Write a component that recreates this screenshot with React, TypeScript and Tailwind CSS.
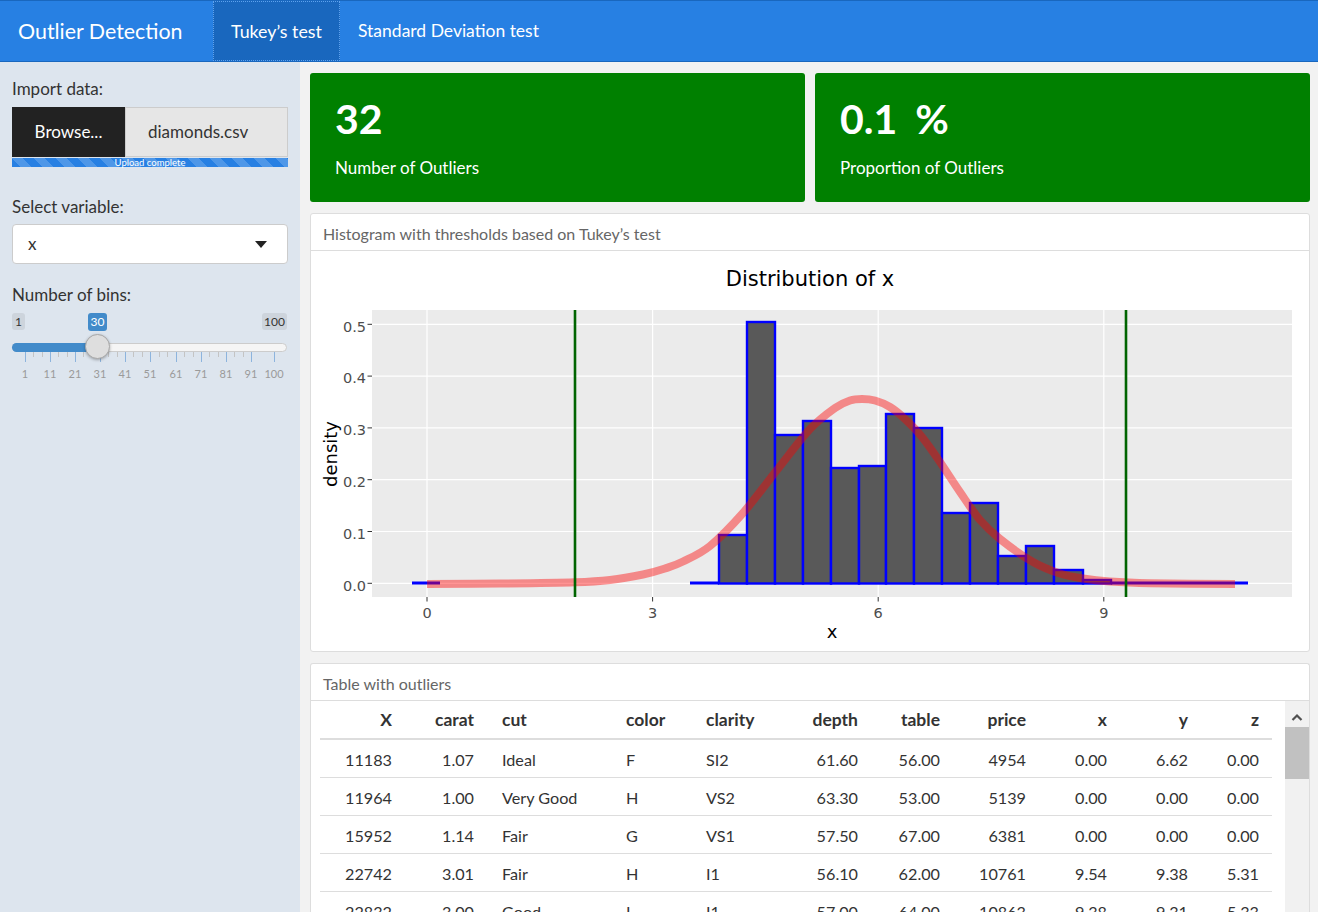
import React from "react";

const FONT = "font-['Lato',sans-serif]";

type Col = { h: string; w: string; a: string };
const cols: Col[] = [
  { h: "X", w: "w-[72px]", a: "text-right" },
  { h: "carat", w: "w-[82px]", a: "text-right" },
  { h: "cut", w: "w-[152px] pl-[28px]", a: "text-left" },
  { h: "color", w: "w-[80px]", a: "text-left" },
  { h: "clarity", w: "w-[74px]", a: "text-left" },
  { h: "depth", w: "w-[78px]", a: "text-right" },
  { h: "table", w: "w-[82px]", a: "text-right" },
  { h: "price", w: "w-[86px]", a: "text-right" },
  { h: "x", w: "w-[81px]", a: "text-right" },
  { h: "y", w: "w-[81px]", a: "text-right" },
  { h: "z", w: "w-[84px] pr-[13px]", a: "text-right" },
];

const rows: string[][] = [
  ["11183", "1.07", "Ideal", "F", "SI2", "61.60", "56.00", "4954", "0.00", "6.62", "0.00"],
  ["11964", "1.00", "Very Good", "H", "VS2", "63.30", "53.00", "5139", "0.00", "0.00", "0.00"],
  ["15952", "1.14", "Fair", "G", "VS1", "57.50", "67.00", "6381", "0.00", "0.00", "0.00"],
  ["22742", "3.01", "Fair", "H", "I1", "56.10", "62.00", "10761", "9.54", "9.38", "5.31"],
  ["22832", "3.00", "Good", "I", "I1", "57.00", "64.00", "10863", "9.38", "9.31", "5.33"],
  ["24068", "2.00", "Premium", "H", "SI2", "58.90", "57.00", "12210", "8.09", "58.90", "8.06"],
];

function smoothPath(pts: [number, number][]) {
  let d = `M${pts[0][0]},${pts[0][1]}`;
  for (let i = 0; i < pts.length - 1; i++) {
    const p0 = pts[i - 1] || pts[i];
    const p1 = pts[i];
    const p2 = pts[i + 1];
    const p3 = pts[i + 2] || p2;
    const c1x = p1[0] + (p2[0] - p0[0]) / 6;
    const c1y = p1[1] + (p2[1] - p0[1]) / 6;
    const c2x = p2[0] - (p3[0] - p1[0]) / 6;
    const c2y = p2[1] - (p3[1] - p1[1]) / 6;
    d += ` C${c1x.toFixed(1)},${c1y.toFixed(1)} ${c2x.toFixed(1)},${c2y.toFixed(1)} ${p2[0]},${p2[1]}`;
  }
  return d;
}

function Chart() {
  const yZero = 584.3;
  const step = 51.8;
  const yGrid = [0, 1, 2, 3, 4, 5].map((i) => yZero - step * i);
  const xGrid = [427, 652.6, 878.2, 1103.8];
  const edges = [719, 747, 775, 803, 831, 859, 886, 914, 942, 970, 998, 1026, 1054, 1083, 1111];
  const tops = [536, 323, 436, 422, 469, 467, 415, 429, 514, 504, 557, 547, 571, 581];
  const curve: [number, number][] = [
    [427, 585], [500, 584.6], [575, 583.3], [610, 581], [643, 575.5], [665, 569.5], [683, 562.5],
    [710, 547], [743, 514], [777, 471], [810, 430], [835, 409], [850, 401.5], [862, 400],
    [875, 401.5], [890, 408], [905, 420], [922, 438], [940, 463], [960, 493], [980, 521],
    [1000, 540], [1033, 563], [1060, 574.5], [1083, 579.5], [1110, 582.5], [1150, 584.2], [1235, 585],
  ];
  return (
    <svg width="998" height="399" viewBox="311 252 998 399" className="block">
      <text x="810" y="287" textAnchor="middle" fontFamily="DejaVu Sans" fontSize="21" fill="#000">
        Distribution of x
      </text>
      <rect x="372" y="311" width="920" height="287" fill="#ebebeb" />
      {yGrid.map((y, i) => (
        <line key={"hy" + i} x1="372" x2="1292" y1={y} y2={y} stroke="#ffffff" strokeWidth="1.2" />
      ))}
      {xGrid.map((x, i) => (
        <line key={"vx" + i} x1={x} x2={x} y1="311" y2="598" stroke="#ffffff" strokeWidth="1.2" />
      ))}
      <line x1="412" x2="440" y1="584" y2="584" stroke="#0000ff" strokeWidth="3" />
      <line x1="690" x2="719" y1="584" y2="584" stroke="#0000ff" strokeWidth="3" />
      <line x1="1111" x2="1248" y1="584" y2="584" stroke="#0000ff" strokeWidth="3" />
      {tops.map((t, i) => (
        <rect
          key={"b" + i}
          x={edges[i]}
          y={t}
          width={edges[i + 1] - edges[i]}
          height={584.5 - t}
          fill="#595959"
          stroke="#0000ff"
          strokeWidth="2.4"
        />
      ))}
      <path d={smoothPath(curve)} fill="none" stroke="#ff0000" strokeOpacity="0.42" strokeWidth="8" />
      <line x1="575" x2="575" y1="311" y2="598" stroke="#006400" strokeWidth="2.6" />
      <line x1="1126" x2="1126" y1="311" y2="598" stroke="#006400" strokeWidth="2.6" />
      {yGrid.map((y, i) => (
        <g key={"yl" + i}>
          <line x1="367.5" x2="372" y1={y} y2={y} stroke="#333333" strokeWidth="1" />
          <text x="366" y={y + 7.3} textAnchor="end" fontFamily="DejaVu Sans" fontSize="14.5" fill="#4d4d4d">
            {(i / 10).toFixed(1)}
          </text>
        </g>
      ))}
      {xGrid.map((x, i) => (
        <g key={"xl" + i}>
          <line x1={x} x2={x} y1="598" y2="602.5" stroke="#333333" strokeWidth="1" />
          <text x={x} y="619" textAnchor="middle" fontFamily="DejaVu Sans" fontSize="14.5" fill="#4d4d4d">
            {i * 3}
          </text>
        </g>
      ))}
      <text x="832" y="639" textAnchor="middle" fontFamily="DejaVu Sans" fontSize="18" fill="#000">
        x
      </text>
      <text
        x="337"
        y="455"
        transform="rotate(-90 337 455)"
        textAnchor="middle"
        fontFamily="DejaVu Sans"
        fontSize="18"
        fill="#000"
      >
        density
      </text>
    </svg>
  );
}

function Slider() {
  const majors = [25, 50, 75, 100, 125, 150, 176, 201, 226, 251, 274];
  const labels = ["1", "11", "21", "31", "41", "51", "61", "71", "81", "91", "100"];
  const minors: number[] = [];
  for (let i = 0; i < majors.length - 2; i++) {
    const a = majors[i];
    const b = majors[i + 1];
    minors.push(a + (b - a) / 3, a + (2 * (b - a)) / 3);
  }
  return (
    <div className="relative mt-[6px] h-[72px] w-[275px]">
      <div className="absolute left-0 top-0 flex h-[17px] w-[13px] items-center justify-center rounded-[3px] bg-[#cdd4dc] text-[12px] text-[#333]">
        1
      </div>
      <div className="absolute left-[76px] top-0 flex h-[18px] w-[19px] items-center justify-center rounded-[3px] bg-[#428bca] text-[12px] text-white">
        30
      </div>
      <div className="absolute right-0 top-0 flex h-[17px] w-[25px] items-center justify-center rounded-[3px] bg-[#cdd4dc] text-[12px] text-[#333]">
        100
      </div>
      <div className="absolute left-0 top-[30px] h-[9px] w-[275px] rounded-full border border-[#cccccc] bg-[#f5f5f5]" />
      <div className="absolute left-0 top-[30px] h-[9px] w-[86px] rounded-l-full bg-[#428bca]" />
      {minors.map((x, i) => (
        <div
          key={"mn" + i}
          className="absolute top-[39px] h-[5px] w-px bg-[#c4c4c4]"
          style={{ left: `${x - 12}px` }}
        />
      ))}
      {majors.map((x, i) => (
        <div
          key={"mj" + i}
          className="absolute top-[39px] h-[10px] w-px bg-[#8db4dd]"
          style={{ left: `${x - 12}px` }}
        />
      ))}
      {majors.map((x, i) => (
        <div
          key={"lb" + i}
          className="absolute top-[54px] w-[30px] text-center text-[11px] leading-[14px] text-[#9a9a9a]"
          style={{ left: `${x - 12 - 15}px` }}
        >
          {labels[i]}
        </div>
      ))}
      <div className="absolute left-[73px] top-[21px] h-[25px] w-[25px] rounded-full border border-[#a8a8a8] bg-[#dedede] shadow-[0_1px_3px_rgba(0,0,0,0.3)]" />
    </div>
  );
}

export default function App() {
  return (
    <div className={`${FONT} flex h-[912px] w-[1318px] flex-col overflow-hidden bg-[#f2f2f2] text-[#333]`}>
      <nav className="flex h-[62px] shrink-0 items-stretch border-b border-t border-[#1967be] bg-[#2780e3] text-white">
        <div className="flex w-[213px] items-center pl-[18px] text-[21.4px]">Outlier Detection</div>
        <div className="flex w-[127px] items-center bg-[#1967be] pl-[18px] text-[17.8px] outline-1 -outline-offset-1 outline-dotted outline-[#5ea2ee]">
          Tukey’s test
        </div>
        <div className="flex items-center pl-[18px] text-[17.5px]">Standard Deviation test</div>
      </nav>
      <div className="flex min-h-0 flex-1">
        <aside className="w-[300px] shrink-0 bg-[#dde5ee] px-[12px] pt-[14px]">
          <div className="h-[25px] text-[17px] leading-[25px]">Import data:</div>
          <div className="mt-[6px] flex h-[50px]">
            <div className="flex w-[113px] items-center justify-center bg-[#222222] text-[17px] text-white">
              Browse...
            </div>
            <div className="flex flex-1 items-center border border-[#cccccc] bg-[#e6e6e6] pl-[22px] text-[17px]">
              diamonds.csv
            </div>
          </div>
          <div className="mt-px flex h-[9px] items-center justify-center overflow-visible bg-[#2780e3] bg-[linear-gradient(45deg,rgba(255,255,255,.18)_25%,transparent_25%,transparent_50%,rgba(255,255,255,.18)_50%,rgba(255,255,255,.18)_75%,transparent_75%,transparent)] bg-size-[22px_22px] text-[9.5px] leading-[9px] text-white">
            Upload complete
          </div>
          <div className="mt-[27px] h-[25px] text-[17px] leading-[25px]">Select variable:</div>
          <div className="mt-[5px] flex h-[40px] items-center justify-between rounded-[4px] border border-[#cccccc] bg-white pl-[15px] pr-[20px] text-[17px]">
            <span>x</span>
            <svg width="12" height="7" viewBox="0 0 12 7">
              <path d="M0 0 L12 0 L6 7 Z" fill="#222" />
            </svg>
          </div>
          <div className="mt-[18px] h-[25px] text-[17px] leading-[25px]">Number of bins:</div>
          <Slider />
        </aside>
        <main className="flex min-w-0 flex-1 flex-col gap-[11px] overflow-hidden pl-[10px] pr-[8px] pt-[11px]">
          <div className="flex h-[129px] shrink-0 gap-[10px]">
            <div className="flex-1 rounded-[3px] bg-[#008000] pl-[25px] pt-[22px] text-white">
              <div className="h-[48px] text-[41px] font-bold leading-[48px]">32</div>
              <div className="mt-[12px] h-[25px] text-[17px] leading-[25px]">Number of Outliers</div>
            </div>
            <div className="flex-1 rounded-[3px] bg-[#008000] pl-[25px] pt-[22px] text-white">
              <div className="h-[48px] text-[41px] font-bold leading-[48px] [word-spacing:8px]">0.1 %</div>
              <div className="mt-[12px] h-[25px] text-[17px] leading-[25px]">Proportion of Outliers</div>
            </div>
          </div>
          <div className="h-[439px] shrink-0 rounded-[3px] border border-[#dddddd] bg-white">
            <div className="flex h-[37px] items-center border-b border-[#dddddd] pl-[12px] pt-[4px] text-[16px] text-[#666]">
              Histogram with thresholds based on Tukey’s test
            </div>
            <Chart />
          </div>
          <div className="min-h-0 flex-1 rounded-t-[3px] border border-b-0 border-[#dddddd] bg-white">
            <div className="flex h-[37px] items-center border-b border-[#dddddd] pl-[12px] pt-[3px] text-[16px] text-[#666]">
              Table with outliers
            </div>
            <div className="flex h-full">
              <div className="ml-[9px] w-[952px] shrink-0 text-[16.2px]">
                <div className="flex h-[39px] items-center border-b-2 border-[#dddddd] pt-[2px] text-[17.5px] font-bold">
                  {cols.map((c) => (
                    <div key={c.h} className={`${c.w} ${c.a} shrink-0 whitespace-nowrap`}>
                      {c.h}
                    </div>
                  ))}
                </div>
                {rows.map((r, ri) => (
                  <div key={ri} className="flex h-[38px] items-center border-b border-[#dddddd] pt-[3px]">
                    {r.map((v, ci) => (
                      <div key={ci} className={`${cols[ci].w} ${cols[ci].a} shrink-0 whitespace-nowrap`}>
                        {v}
                      </div>
                    ))}
                  </div>
                ))}
              </div>
              <div className="flex-1" />
              <div className="flex w-[24px] shrink-0 flex-col items-center bg-[#f1f1f1]">
                <svg width="12" height="8" viewBox="0 0 12 8" className="mt-[12px]">
                  <polyline points="1.5,7 6,2.5 10.5,7" fill="none" stroke="#505050" strokeWidth="2.2" />
                </svg>
                <div className="mt-[6px] h-[52px] w-full bg-[#c1c1c1]" />
              </div>
            </div>
          </div>
        </main>
      </div>
    </div>
  );
}
